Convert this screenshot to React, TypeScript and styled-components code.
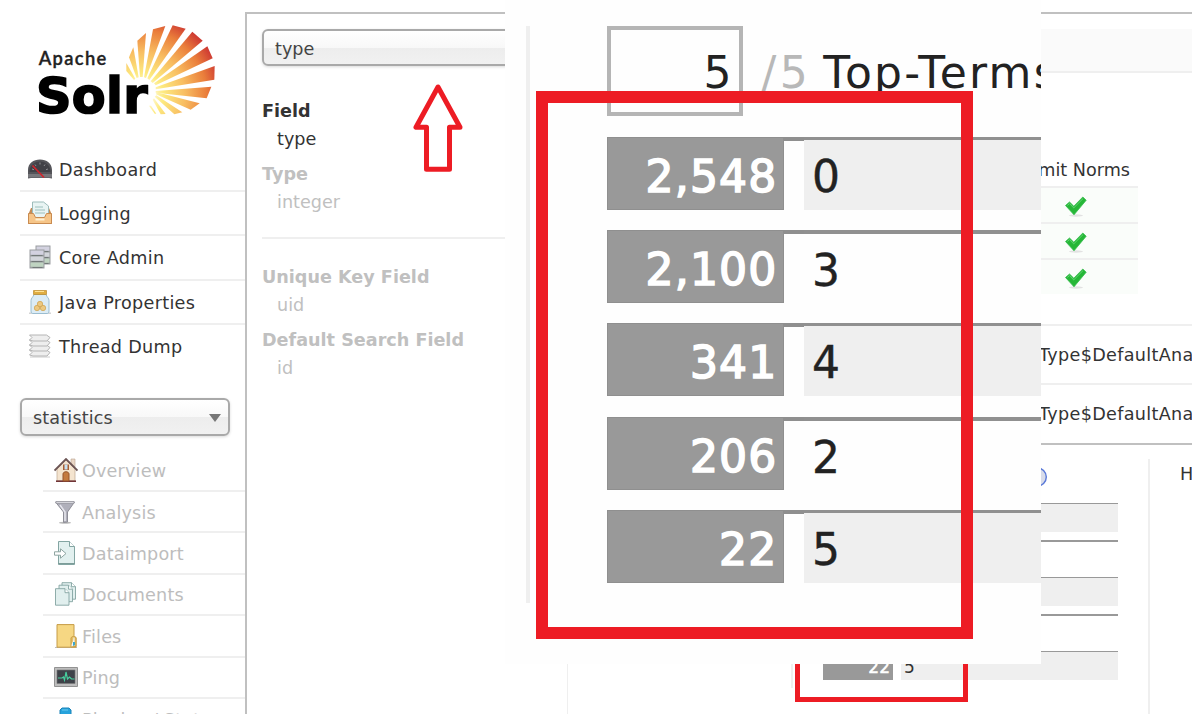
import React from "react";
import styled, { createGlobalStyle } from "styled-components";

const Global = createGlobalStyle`
  * { box-sizing: border-box; }
  body { margin: 0; background: #fff; overflow: hidden; }
`;

const sans = `"DejaVu Sans", Verdana, sans-serif`;

const Page = styled.div`
  position: relative;
  display: flex;
  width: 1192px;
  height: 714px;
  overflow: hidden;
  background: #fff;
  color: #333;
  font: 17.6px/22px ${sans};
  white-space: nowrap;
`;

const Sidebar = styled.nav`
  flex: 0 0 245px;
  display: flex;
  flex-direction: column;
  padding-left: 20px;
`;

const LogoLink = styled.div`
  height: 147.67px;
  flex: none;
  margin-left: -20px;
  svg { display: block; }
`;

const MenuItem = styled.div<{ $last?: boolean }>`
  flex: none;
  display: flex;
  align-items: center;
  gap: 7px;
  height: 44.333px;
  padding-left: 8px;
  border-bottom: 2px solid ${(p) => (p.$last ? "transparent" : "#efefef")};
  letter-spacing: 0.3px;
  svg { flex: none; }
`;

const Label = styled.span`
  padding-top: 2px;
`;

const SubMenu = styled.div`
  margin-left: 23px;
  padding-top: 14.6px;
  display: flex;
  flex-direction: column;
`;

const SubItem = styled(MenuItem)`
  height: 41.4px;
  gap: 4px;
  padding-left: 11px;
  color: #bdbdbd;
  letter-spacing: 0.17px;
`;

const Select = styled.div<{ $w: number; $h: number }>`
  flex: none;
  display: flex;
  align-items: center;
  justify-content: space-between;
  width: ${(p) => p.$w}px;
  height: ${(p) => p.$h}px;
  padding: 2px 7px 0 11px;
  border: 2px solid #a9a9a9;
  border-radius: 6px;
  background: linear-gradient(#fff 0%, #f8f8f8 50%, #ededed 51%, #f1f1f1 100%);
  box-shadow: 0 1px 3px rgba(0, 0, 0, 0.15);
  color: #444;
`;

const CoreSelect = styled(Select)`
  margin-top: 28.7px;
  padding-top: 3px;
  letter-spacing: 0.15px;
`;

const Caret = styled.i`
  border: 6.5px solid transparent;
  border-top: 8px solid #777;
  border-bottom: 0;
`;

const Main = styled.main`
  flex: 1;
  min-width: 0;
  margin-top: 12px;
  display: flex;
  border: solid #c0c0c0;
  border-width: 2px 0 0 2px;
  padding-top: 15px;
`;

const Fields = styled.section`
  flex: 0 0 320px;
  padding-left: 15px;
`;

const Definitions = styled.dl`
  margin: 0;
  display: flex;
  flex-direction: column;
  dt { font-weight: bold; height: 28px; line-height: 28px; font-size: 17.6px; }
  dd { margin: 0 0 7px 15px; height: 28px; line-height: 28px; }
`;

const Active = styled(Definitions)`
  margin-top: 31px;
`;

const Muted = styled(Definitions)`
  color: #c0c0c0;
`;

const Rule = styled.hr`
  height: 2px;
  margin: 14px 0 24px;
  border: 0;
  background: #efefef;
`;

const Detail = styled.section`
  flex: 1;
  min-width: 0;
  display: flex;
  flex-direction: column;
  border-left: 1px solid #efefef;
`;

const TitleBar = styled.div`
  flex: none;
  height: 44px;
  background: #fafafa;
  border-bottom: 2px solid #efefef;
`;

const Flags = styled.div`
  flex: none;
  width: 570px;
  margin-top: 80px;
  height: 171px;
  display: flex;
  flex-direction: column;
`;

const FlagHead = styled.div`
  height: 33px;
  line-height: 34px;
  padding-right: 8px;
  text-align: right;
`;

const FlagRow = styled.div`
  display: flex;
  justify-content: flex-end;
  align-items: center;
  height: 36px;
  padding: 3px 50px 0 0;
  border-top: 2px solid #efefef;
  background: #fafdfa;
`;

const Analyzer = styled.div<{ $h: number }>`
  flex: none;
  height: ${(p) => p.$h}px;
  padding-left: 471px;
  border-top: 2px solid #efefef;
  line-height: ${(p) => p.$h - 1}px;
  letter-spacing: 0.32px;
`;

const Stats = styled.div`
  flex: 1;
  display: flex;
  border-top: 2px solid #c0c0c0;
  padding-top: 14px;
`;

const Terms = styled.div`
  flex: 0 0 357px;
  height: 229px;
  margin-left: 223px;
  padding: 0 30px;
  border-left: 2px solid #efefef;
`;

const TermsHead = styled.div`
  height: 44px;
  display: flex;
  align-items: center;
  justify-content: flex-end;
  padding: 0 71px 8px 0;
`;

const TermRow = styled.div<{ $odd: boolean }>`
  display: flex;
  height: 29px;
  margin-bottom: 8px;
  border-top: ${(p) => (p.$odd ? 1 : 2)}px solid #999;
  font-size: 17px;
  line-height: 31px;
`;

const TermCount = styled.span`
  width: 70px;
  height: 28px;
  margin-right: 8px;
  padding-right: 3px;
  text-align: right;
  background: #999;
  color: #fff;
  -webkit-text-stroke: 0.5px #fff;
`;

const TermValue = styled.span<{ $odd: boolean }>`
  flex: 1;
  height: ${(p) => (p.$odd ? 28 : 27)}px;
  padding-left: 3px;
  background: ${(p) => (p.$odd ? "#efefef" : "#fff")};
`;

const Histogram = styled.div`
  flex: none;
  padding: 4px 0 0 30px;
  border-left: 2px solid #efefef;
`;

/* Enlarged view of the top terms, lying over the page */
const Magnifier = styled.aside`
  position: absolute;
  left: 505px;
  top: 0;
  width: 536px;
  height: 664px;
  overflow: hidden;
  padding: 26px 0 0 21px;
  background: #fefefe;
  color: #222;
  font-size: 44px;
`;

const MagnifierBody = styled.div`
  height: 577px;
  padding-left: 76.5px;
  border-left: 4px solid #efefef;
`;

const BigHead = styled.div`
  display: flex;
  height: 110.5px;
  line-height: 93px;
`;

const BigInput = styled.div`
  flex: none;
  width: 136px;
  height: 90px;
  border: 4.5px solid #b5b5b5;
  padding-right: 7px;
  line-height: 86px;
  text-align: right;
`;

const BigTotal = styled.span`
  margin-left: 19px;
  color: #b8b8b8;
  letter-spacing: 3.5px;
`;

const BigTitle = styled.span`
  margin-left: 12px;
  letter-spacing: 2.2px;
`;

const BigRow = styled.div`
  display: flex;
  height: 73px;
  margin-bottom: 20.4px;
  line-height: 80px;
`;

const BigCount = styled.span`
  width: 177px;
  padding-right: 5px;
  text-align: right;
  background: #999;
  border: 1px solid #8f8f8f;
  color: #fff;
  letter-spacing: 1.2px;
  line-height: 78px;
  -webkit-text-stroke: 1.6px #fff;
`;

const BigGap = styled.span`
  width: 20.5px;
  border-top: 4.5px solid #8f8f8f;
`;

const BigValue = styled.span<{ $odd: boolean }>`
  flex: 1;
  padding-left: 8px;
  border-top: ${(p) => (p.$odd ? 3 : 4.5)}px solid #909090;
  background: ${(p) => (p.$odd ? "#efefef" : "#fefefe")};
  line-height: ${(p) => (p.$odd ? 74 : 73)}px;
  -webkit-text-stroke: 0.4px #222;
`;

const BigFrame = styled.div`
  position: absolute;
  left: 31px;
  top: 91px;
  width: 436.5px;
  height: 547.5px;
  border: 12px solid #ed1c24;
`;

const SmallFrame = styled.div`
  position: absolute;
  left: 795px;
  top: 464px;
  width: 173px;
  height: 238px;
  border: 5px solid #ed1c24;
`;

const Arrow = styled.svg`
  position: absolute;
  left: 411px;
  top: 82px;
`;

const rays = [
  "379,189 379,213 402,240 406,236",
  "400,142 387,172 410,234 416,232",
  "438,99 412,122 420,231 428,231",
  "496,78 459,88 432,232 438,234",
  "557,86 518,76 442,235 448,240",
  "608,122 577,95 452,244 458,249",
  "638,175 622,139 462,250 467,256",
  "643,239 644,198 467,262 467,268",
  "620,295 634,260 467,273 467,278",
  "572,329 599,310 470,277 468,283",
  "523,343 547,337 469,286 464,290",
  "482,343 497,342 462,295 458,299",
  "447,317 453,317 469,341 464,341",
];

const Logo = () => (
  <svg width="245" height="140" viewBox="0 0 735 420">
    <defs>
      <radialGradient id="sun" gradientUnits="userSpaceOnUse" cx="425" cy="285" r="260">
        <stop offset="0.1" stopColor="#fffbe0" />
        <stop offset="0.25" stopColor="#fdea80" />
        <stop offset="0.5" stopColor="#f8bd61" />
        <stop offset="0.75" stopColor="#ea7e3b" />
        <stop offset="1" stopColor="#c4202f" />
      </radialGradient>
    </defs>
    {rays.map((r) => <polygon key={r} points={r} fill="url(#sun)" />)}
    <text x="116" y="194" fontFamily="Lato" fontWeight="600" fontSize="55" textLength="203" fill="#222" stroke="#222" strokeWidth="1">Apache</text>
    <text x="108" y="340" fontFamily="DejaVu Sans" fontWeight="bold" fontSize="148" textLength="335" fill="#000" stroke="#000" strokeWidth="5">Solr</text>
  </svg>
);

const Icon = ({ children }: { children: React.ReactNode }) => (
  <svg width="24" height="24" viewBox="0 0 24 24">{children}</svg>
);

const Gauge = () => (
  <Icon>
    <path d="M0 21.5V13C0 6.500 5.500 2.500 12 2.500S24 6.500 24 13v8.500l-3-.5H3z" fill="#55555a" />
    <path d="M1.500 15c0-6 4.500-10.500 10.500-10.500S22.500 9 22.500 15z" fill="#414147" />
    <path d="M0 17h24v3.500H0z" fill="#77777b" />
    <path d="M4 12l2 .7M7 7.500l1 1.500M12 5.500v2M17 7.500L16 9M20 12l-2 .7" stroke="#8c8c90" />
    <path d="M4.500 8.500L16 20.500" stroke="#d3242c" strokeWidth="1.700" />
  </Icon>
);
const Tray = () => (
  <Icon>
    <path d="M3 7h18l3 7v9H0v-9z" fill="#c58b54" />
    <path d="M4.500 1h11l5 4v12h-16z" fill="#e9f4f3" stroke="#9dbcba" />
    <path d="M7 6h8M7 9h10M7 12h10" stroke="#9cc0bd" />
    <path d="M.5 12.500h5l2 4h9l2-4h5v10H.5z" fill="#f6c588" stroke="#c98b50" />
    <path d="M7.500 18.500h9" stroke="#fff0d2" strokeWidth="2" />
  </Icon>
);
const Server = ({ x, y }: { x: number; y: number }) => (
  <g transform={`translate(${x} ${y})`}>
    <path d="M0 0h15v19H0z" fill="#9a9da0" />
    <path d="M1 1h13v4.300H1z" fill="#d3d2e0" />
    <path d="M1 7h13v4.300H1z" fill="#d3d6db" />
    <path d="M1 13h13v4.300H1z" fill="#bfd4c1" />
    <path d="M2 6h11M2 12h11M3 18h10" stroke="#737a79" />
  </g>
);
const Servers = () => (
  <Icon><Server x={7.500} y={0.500} /><Server x={1.500} y={4.500} /></Icon>
);
const Jar = () => (
  <Icon>
    <path d="M1 22.500h22v1.500H1z" fill="#aaa" opacity=".5" />
    <path d="M6 4.500h12c1 3 3 3.500 3 6v10.500c0 2-1 2.500-2 2.500H5c-1 0-2-.5-2-2.500V10.500C3 8 5 7.500 6 4.500z" fill="#dcecf5" stroke="#9bbdd0" />
    <path d="M5.500.5h13v4h-13z" fill="#e0ad42" stroke="#bd8b2b" strokeWidth=".7" />
    <path d="M7 1.500h9" stroke="#ffe395" />
    <g fill="#ecc880" stroke="#cfa04a" strokeWidth=".7"><circle cx="9" cy="18" r="2.700" /><circle cx="15" cy="18" r="2.700" /><circle cx="12" cy="14" r="2.700" /></g>
  </Icon>
);
const Stack = () => (
  <Icon>
    <path d="M2 23h20" stroke="#ccc" />
    {[17, 12, 7, 2].map((y) => (
      <path key={y} d={`M1.500 ${y - 1}h17l3.500 2.500-3 3.500H5l-3.500-1 2.500-2.500z`} fill="#eee" stroke="#b4b4b4" />
    ))}
  </Icon>
);
const House = () => (
  <Icon>
    <path d="M17 1h4v8h-4z" fill="#ead7c6" stroke="#bba28f" strokeWidth=".6" />
    <path d="M3 11L12 2l9 9v12H3z" fill="#f4e4cf" stroke="#bda68d" strokeWidth=".7" />
    <path d="M.5 12.500L12 1l11.500 11.500" fill="none" stroke="#6b5454" strokeWidth="1.800" />
    <path d="M2 23.200h20" stroke="#713437" strokeWidth="1.600" />
    <path d="M9 23v-7c0-3 6-3 6 0v7z" fill="#c47b40" stroke="#96552a" />
    <path d="M9 6.500h6v5.500H9z" fill="#a65f35" /><path d="M10.500 6.500h3v5h-3z" fill="#c8e1f1" />
  </Icon>
);
const Funnel = () => (
  <Icon>
    <ellipse cx="11" cy="22.800" rx="6" ry="1" fill="#bbb" />
    <path d="M1.500 2h19l-7 10v10l-4 .5V12z" fill="#b0b0bb" stroke="#8e8e97" />
    <path d="M2 1.500h18v2H2z" fill="#d6d6dc" stroke="#92929b" strokeWidth=".7" />
    <path d="M6 5l5 7v9" fill="none" stroke="#e7e7ee" strokeWidth="1.500" />
  </Icon>
);
const Import = () => (
  <Icon>
    <path d="M4.500.5h11l5 5v18h-16z" fill="#e2f0ef" stroke="#83a5a2" />
    <path d="M15.500.5v5h5" fill="#fff" stroke="#83a5a2" />
    <path d="M4 22.500h17" stroke="#7c9c98" />
    <path d="M.5 10.800h6v-3l5.500 4.700-5.500 4.700v-3h-6z" fill="#fff" stroke="#8fa5a2" />
  </Icon>
);
const Docs = () => (
  <Icon>
    {[[8, 0], [5, 2.500], [1.500, 6]].map(([x, y]) => (
      <g key={x} transform={`translate(${x} ${y})`} stroke="#83a4a1" strokeWidth=".9">
        <path d="M0 .7h9.500l4 4v12.500H0z" fill="#e1efee" /><path d="M9.500.7v4h4" fill="#fff" />
      </g>
    ))}
  </Icon>
);
const Folder = () => (
  <Icon>
    <path d="M1 23.500h22" stroke="#bbb" />
    <path d="M3 .6h17v11l2 2v9.600H3z" fill="#f6d783" stroke="#c69c47" />
    <path d="M17 23v-9c1-2 3-2 5 0v8.500z" fill="#e7bf62" stroke="#c69c47" />
    <path d="M17.500 22.500c0-4 2-4 2-9h1v8z" fill="#f3f8fa" /><path d="M19 18h2v3l-2 1z" fill="#3ca7cb" />
  </Icon>
);
const Monitor = () => (
  <Icon>
    <path d="M.5 2.500h23v19H.5z" fill="#bdbdbd" stroke="#929292" />
    <path d="M3 5h18v13.500H3z" fill="#3e4249" stroke="#777" strokeWidth=".6" />
    <path d="M4 13h4l1.500-1 1 3 1.500-8 1.500 7 2-2 2 2h3" fill="none" stroke="#47cf9e" strokeWidth="1.200" />
  </Icon>
);
const Plug = () => (
  <Icon>
    <path d="M8 1h7l2 2v9H6V3z" fill="#27a3dc" stroke="#1b83b8" />
    <path d="M8 3h6" stroke="#6ccaf0" />
  </Icon>
);
const Check = () => (
  <svg width="24" height="22" viewBox="0 0 24 22">
    <ellipse cx="12" cy="19.500" rx="7" ry="1.200" fill="#e2e2e2" />
    <path d="M1.500 9.500l4-3.500 4.300 4.200L18.800 1l3.400 3.200L10 18.800z" fill="#26b737" stroke="#35bb4c" strokeWidth=".8" />
    <path d="M3.300 9.500l2.200-1.900 4.200 4.300L19 2.600" stroke="#5fd670" fill="none" />
  </svg>
);
const Help = () => (
  <svg width="20" height="22" viewBox="0 0 20 22">
    <circle cx="10" cy="11" r="9.300" fill="#d8dcea" stroke="#5878d8" strokeWidth="1.400" />
  </svg>
);

const menu: [string, React.FC][] = [
  ["Dashboard", Gauge],
  ["Logging", Tray],
  ["Core Admin", Servers],
  ["Java Properties", Jar],
  ["Thread Dump", Stack],
];

const coreMenu: [string, React.FC][] = [
  ["Overview", House],
  ["Analysis", Funnel],
  ["Dataimport", Import],
  ["Documents", Docs],
  ["Files", Folder],
  ["Ping", Monitor],
  ["Plugins / Stats", Plug],
];

const terms = [
  ["2,548", "0"],
  ["2,100", "3"],
  ["341", "4"],
  ["206", "2"],
  ["22", "5"],
];

export default function App() {
  return (
    <Page>
      <Global />
      <Sidebar>
        <LogoLink><Logo /></LogoLink>
        {menu.map(([label, Glyph], i) => (
          <MenuItem key={label} $last={i === menu.length - 1}><Glyph /><Label>{label}</Label></MenuItem>
        ))}
        <CoreSelect $w={210} $h={38}>statistics<Caret /></CoreSelect>
        <SubMenu>
          {coreMenu.map(([label, Glyph]) => (
            <SubItem key={label}><Glyph /><Label>{label}</Label></SubItem>
          ))}
        </SubMenu>
      </Sidebar>
      <Main>
        <Fields>
          <Select $w={290} $h={37}>type</Select>
          <Active><dt>Field</dt><dd>type</dd></Active>
          <Muted><dt>Type</dt><dd>integer</dd></Muted>
          <Rule />
          <Muted>
            <dt>Unique Key Field</dt><dd>uid</dd>
            <dt>Default Search Field</dt><dd>id</dd>
          </Muted>
        </Fields>
        <Detail>
          <TitleBar />
          <Flags>
            <FlagHead>Omit Norms</FlagHead>
            <FlagRow><Check /></FlagRow>
            <FlagRow><Check /></FlagRow>
            <FlagRow><Check /></FlagRow>
          </Flags>
          <Analyzer $h={59}>Type$DefaultAna</Analyzer>
          <Analyzer $h={60}>Type$DefaultAna</Analyzer>
          <Stats>
            <Terms>
              <TermsHead><Help /></TermsHead>
              {terms.map(([count, value], i) => (
                <TermRow key={value} $odd={i % 2 === 0}>
                  <TermCount>{count}</TermCount>
                  <TermValue $odd={i % 2 === 0}>{value}</TermValue>
                </TermRow>
              ))}
            </Terms>
            <Histogram>H</Histogram>
          </Stats>
        </Detail>
      </Main>
      <SmallFrame />
      <Arrow width="56" height="94" viewBox="411 82 56 94">
        <path d="M438 87L416 127.300h10.500v42h23v-42H460z" fill="none" stroke="#ed1c24" strokeWidth="5" strokeLinejoin="round" />
      </Arrow>
      <Magnifier>
        <MagnifierBody>
          <BigHead>
            <BigInput>5</BigInput>
            <BigTotal>/5</BigTotal>
            <BigTitle>Top-Terms</BigTitle>
          </BigHead>
          {terms.map(([count, value], i) => (
            <BigRow key={value}>
              <BigCount>{count}</BigCount>
              <BigGap />
              <BigValue $odd={i % 2 === 0}>{value}</BigValue>
            </BigRow>
          ))}
        </MagnifierBody>
        <BigFrame />
      </Magnifier>
    </Page>
  );
}
